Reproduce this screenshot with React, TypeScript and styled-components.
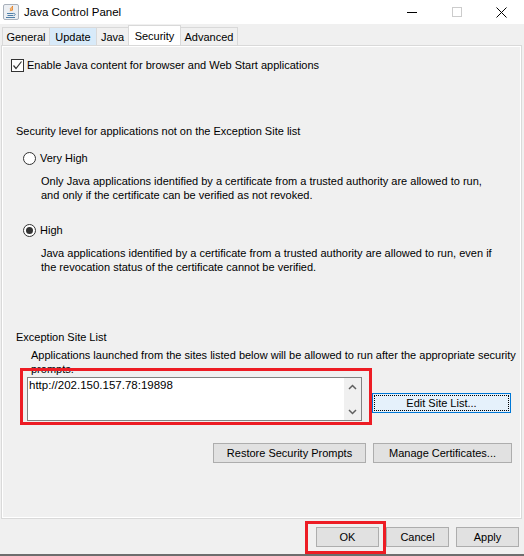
import React from "react";
import styled, { createGlobalStyle } from "styled-components";

const Global = createGlobalStyle`
  html, body { margin: 0; padding: 0; background: #f0f0f0; }
  body { font-family: "Liberation Sans", Arial, sans-serif; font-size: 11px; color: #000; }
  * { box-sizing: border-box; }
`;

const Window = styled.div`
  width: 524px;
  height: 556px;
  display: flex;
  flex-direction: column;
  background: #f0f0f0;
  overflow: hidden;
`;

const TitleBar = styled.div`
  height: 24px;
  flex: none;
  background: #fff;
  display: flex;
  align-items: center;
`;

const AppIcon = styled.svg`
  width: 16px;
  height: 16px;
  margin-left: 3px;
  flex: none;
`;

const Title = styled.span`
  margin-left: 5px;
  font-size: 11.5px;
  flex: 1;
`;

const CaptionButton = styled.div`
  width: 45px;
  height: 24px;
  display: flex;
  align-items: center;
  justify-content: center;
`;

const TabStrip = styled.div`
  height: 21px;
  flex: none;
  display: flex;
  align-items: flex-end;
  padding-left: 2px;
`;

const Tab = styled.div<{ $w: number; $selected?: boolean; $hover?: boolean }>`
  width: ${(p) => p.$w}px;
  height: ${(p) => (p.$selected ? 20 : 18)}px;
  margin-left: -1px;
  &:first-child { margin-left: 0; }
  border: 1px solid #d9d9d9;
  border-bottom: none;
  background: ${(p) => (p.$selected ? "#ffffff" : p.$hover ? "#d8eaf9" : "#f0f0f0")};
  position: relative;
  z-index: ${(p) => (p.$selected ? 2 : 1)};
  display: flex;
  align-items: center;
  justify-content: center;
  padding-top: 1px;
  white-space: nowrap;
`;

const Panel = styled.div`
  flex: 1;
  margin: 0 2px 0 1px;
  border: 1px solid #d9d9d9;
  box-shadow: inset 0 0 0 1px #fff;
  display: flex;
  flex-direction: column;
  padding-right: 9px;
`;

const CheckRow = styled.label`
  display: flex;
  align-items: center;
  gap: 3px;
  height: 14px;
  margin: 12px 0 0 9px;
  white-space: nowrap;
`;

const CheckBox = styled.span`
  width: 13px;
  height: 13px;
  border: 1px solid #333;
  background: #fff;
  display: flex;
  align-items: center;
  justify-content: center;
`;

const Line = styled.div<{ $x: number; $gap: number }>`
  margin: ${(p) => p.$gap}px 0 0 ${(p) => p.$x}px;
  line-height: 14px;
  white-space: nowrap;
`;

const RadioRow = styled.label<{ $gap: number }>`
  display: flex;
  align-items: center;
  gap: 4px;
  height: 14px;
  margin: ${(p) => p.$gap}px 0 0 21px;
`;

const Radio = styled.span<{ $checked?: boolean }>`
  width: 13px;
  height: 13px;
  border-radius: 50%;
  border: 1px solid #333;
  background: #fff;
  display: flex;
  align-items: center;
  justify-content: center;
  &::after {
    content: "";
    width: 7px;
    height: 7px;
    border-radius: 50%;
    background: ${(p) => (p.$checked ? "#333" : "transparent")};
  }
`;

const ListRow = styled.div`
  position: relative;
  display: flex;
  align-items: flex-start;
  gap: 10px;
  margin: 1px 0 0 25px;
`;

const ListBox = styled.div`
  width: 335px;
  height: 44px;
  border: 1px solid #828282;
  background: #fff;
  display: flex;
`;

const ListText = styled.div`
  flex: 1;
  font-size: 11.5px;
  line-height: 14px;
  padding-left: 1px;
`;

const ScrollBar = styled.div`
  width: 17px;
  background: #f0f0f0;
  display: flex;
  flex-direction: column;
  justify-content: space-between;
`;

const ScrollArrow = styled.div`
  height: 17px;
  display: flex;
  align-items: center;
  justify-content: center;
`;

const RedBox = styled.div<{ $l: number; $t: number; $w: number; $h: number }>`
  position: absolute;
  left: ${(p) => p.$l}px;
  top: ${(p) => p.$t}px;
  width: ${(p) => p.$w}px;
  height: ${(p) => p.$h}px;
  border: 3px solid #ed1c24;
  pointer-events: none;
  z-index: 5;
`;

const Button = styled.button<{ $w: number; $focused?: boolean; $top?: number }>`
  width: ${(p) => p.$w}px;
  height: 20px;
  margin-top: ${(p) => p.$top ?? 0}px;
  padding: 0;
  font-family: "Liberation Sans", Arial, sans-serif;
  font-size: 11px;
  color: #000;
  border: 1px solid ${(p) => (p.$focused ? "#0078d7" : "#adadad")};
  background: ${(p) => (p.$focused ? "#e5f1fb" : "#e1e1e1")};
  outline: ${(p) => (p.$focused ? "1px dotted #000" : "none")};
  outline-offset: -3px;
  flex: none;
`;

const ButtonRow = styled.div`
  display: flex;
  justify-content: flex-end;
  gap: 7px;
  margin-top: 22px;
`;

const Footer = styled.div`
  height: 35px;
  flex: none;
  display: flex;
  justify-content: flex-end;
  align-items: flex-start;
  gap: 7px;
  padding: 8px 5px 0 0;
`;

const Anchor = styled.div`
  position: relative;
  display: flex;
`;

const BottomEdge = styled.div`
  height: 2px;
  flex: none;
  background: #6d6d6d;
`;

const Chevron = ({ up }: { up?: boolean }) => (
  <svg width="9" height="6" viewBox="0 0 9 6">
    <polyline
      points={up ? "1,5 4.5,1.5 8,5" : "1,1 4.5,4.5 8,1"}
      fill="none"
      stroke="#606060"
      strokeWidth="1.5"
    />
  </svg>
);

export default function App() {
  return (
    <>
      <Global />
      <Window>
        <TitleBar>
          <AppIcon viewBox="0 0 16 16">
            <rect x="0.5" y="0.5" width="15" height="15" rx="1.5" fill="#eceff3" stroke="#a9b1bb" />
            <path d="M9.8 2.2c-2.2 1.4 0.8 2.6-1.2 4.6" fill="none" stroke="#e76f00" strokeWidth="1.2" />
            <path d="M8 3.6c-1.6 1.3 0.4 2-0.9 3.6" fill="none" stroke="#f08c1e" strokeWidth="1" />
            <path d="M4 9.5h6.5M4.5 11.5h5.5M3 13.5h9" stroke="#4f7fa8" strokeWidth="1" fill="none" />
            <path d="M10.5 9.3c2.2 0 2.2 2.4 0 2.4" stroke="#4f7fa8" strokeWidth="1" fill="none" />
          </AppIcon>
          <Title>Java Control Panel</Title>
          <CaptionButton>
            <svg width="10" height="10" viewBox="0 0 10 10">
              <path d="M0 5.5h10" stroke="#000" strokeWidth="1" />
            </svg>
          </CaptionButton>
          <CaptionButton>
            <svg width="10" height="10" viewBox="0 0 10 10">
              <rect x="0.5" y="0.5" width="9" height="9" fill="none" stroke="#cccccc" strokeWidth="1" />
            </svg>
          </CaptionButton>
          <CaptionButton>
            <svg width="11" height="11" viewBox="0 0 11 11">
              <path d="M0.5 0.5L10.5 10.5M10.5 0.5L0.5 10.5" stroke="#000" strokeWidth="1" />
            </svg>
          </CaptionButton>
        </TitleBar>

        <TabStrip>
          <Tab $w={48}>General</Tab>
          <Tab $w={48} $hover>Update</Tab>
          <Tab $w={33}>Java</Tab>
          <Tab $w={53} $selected>Security</Tab>
          <Tab $w={58}>Advanced</Tab>
        </TabStrip>

        <Panel>
          <CheckRow>
            <CheckBox>
              <svg width="11" height="11" viewBox="0 0 11 11">
                <polyline points="1.5,5.5 4,8.5 9.5,1.5" fill="none" stroke="#333" strokeWidth="1.2" />
              </svg>
            </CheckBox>
            <span>Enable Java content for browser and Web Start applications</span>
          </CheckRow>

          <Line $x={14} $gap={52}>Security level for applications not on the Exception Site list</Line>

          <RadioRow $gap={13}>
            <Radio />
            <span>Very High</span>
          </RadioRow>
          <Line $x={39} $gap={9}>
            Only Java applications identified by a certificate from a trusted authority are allowed to run,
            <br />
            and only if the certificate can be verified as not revoked.
          </Line>

          <RadioRow $gap={21}>
            <Radio $checked />
            <span>High</span>
          </RadioRow>
          <Line $x={39} $gap={9}>
            Java applications identified by a certificate from a trusted authority are allowed to run, even if
            <br />
            the revocation status of the certificate cannot be verified.
          </Line>

          <Line $x={14} $gap={56}>Exception Site List</Line>
          <Line $x={29} $gap={4}>
            Applications launched from the sites listed below will be allowed to run after the appropriate security
            <br />
            prompts.
          </Line>

          <ListRow>
            <ListBox>
              <ListText>http://202.150.157.78:19898</ListText>
              <ScrollBar>
                <ScrollArrow>
                  <Chevron up />
                </ScrollArrow>
                <ScrollArrow>
                  <Chevron />
                </ScrollArrow>
              </ScrollBar>
            </ListBox>
            <RedBox $l={-7} $t={-9} $w={352} $h={57} />
            <Button $w={139} $top={16} $focused>
              Edit Site List...
            </Button>
          </ListRow>

          <ButtonRow>
            <Button $w={153}>Restore Security Prompts</Button>
            <Button $w={139}>Manage Certificates...</Button>
          </ButtonRow>
        </Panel>

        <Footer>
          <Anchor>
            <Button $w={63}>OK</Button>
            <RedBox $l={-11} $t={-6} $w={81} $h={33} />
          </Anchor>
          <Button $w={63}>Cancel</Button>
          <Button $w={63}>Apply</Button>
        </Footer>
        <BottomEdge />
      </Window>
    </>
  );
}
